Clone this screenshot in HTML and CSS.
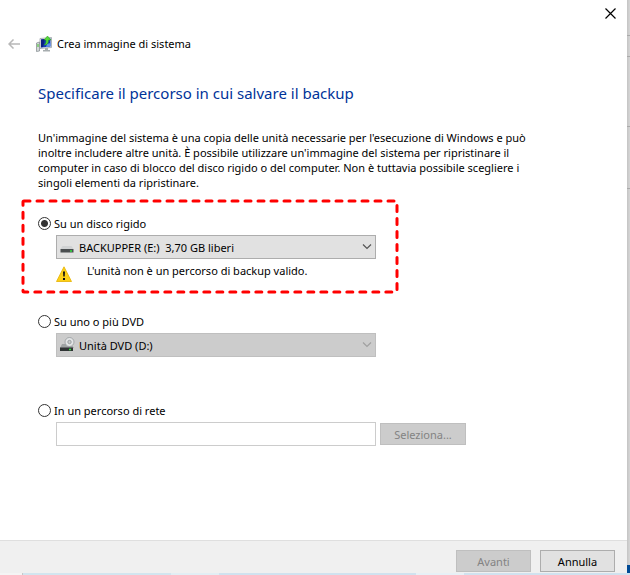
FILE: index.html
```html
<!DOCTYPE html>
<html lang="it">
<head>
  <meta charset="UTF-8">
  <meta name="viewport" content="width=device-width, initial-scale=1.0">
  <title>Crea immagine di sistema</title>
  <link rel="stylesheet" href="styles.css">
</head>
<body>
  <div class="desktop">
    <div class="window">
      <header class="titlebar">
        <button class="close" type="button" aria-label="Chiudi">
          <svg width="11" height="11" viewBox="0 0 11 11"><path d="M.5 .5l10 10M10.500 .5l-10 10" stroke="#000" stroke-width="1.2"/></svg>
        </button>
      </header>
      <div class="wizard-title">
        <button class="back" type="button" aria-label="Indietro" disabled>
          <svg width="12" height="10" viewBox="0 0 12 10" fill="none" stroke="#b8b8b8" stroke-width="1.500"><path d="M12 5H1M5.500 .5L1 5l4.500 4.500"/></svg>
        </button>
        <svg class="app-icon" width="16" height="16" viewBox="0 0 16 16">
          <path d="M.5 7l3-1v9l-3 .5z" fill="#d5d8da" stroke="#7e8689" stroke-width=".7"/>
          <path d="M2 8v3" stroke="#45c62c"/>
          <path d="M4 2.500L15.500 1.500v10L4 12.500z" fill="#e6ebee" stroke="#929a9f" stroke-width=".7"/>
          <path d="M5 3.500l9.500-1v8l-9.500 1z" fill="#1638b8"/>
          <path d="M5 3.500l4-.5-2 8-2 .3z" fill="#0b1f82"/>
          <path d="M11 8l3.500-1v3.500l-4.500 .5z" fill="#5e93e8"/>
          <path d="M9 12h3v2h2v1.500H7V14h2z" fill="#a7adaf"/>
          <path d="M8 9c2-1 2-3 2-5H8l3.500-4L15 4h-2.500c0 3-1 5-4.500 5z" fill="#55d83a" stroke="#24991c" stroke-width=".5"/>
        </svg>
        <span>Crea immagine di sistema</span>
      </div>

      <main class="page">
        <h1>Specificare il percorso in cui salvare il backup</h1>
        <p class="intro">
          Un'immagine del sistema è una copia delle unità necessarie per l'esecuzione di Windows e può<br>
          inoltre includere altre unità. È possibile utilizzare un'immagine del sistema per ripristinare il<br>
          computer in caso di blocco del disco rigido o del computer. Non è tuttavia possibile scegliere i<br>
          singoli elementi da ripristinare.
        </p>

        <section class="option highlight">
          <svg class="outline" aria-hidden="true"><rect width="100%" height="100%" rx="1"/></svg>
          <label class="choice"><input type="radio" name="target" checked>Su un disco rigido</label>
          <div class="drive">
            <select aria-label="Disco rigido">
              <option>BACKUPPER (E:)&nbsp; 3,70 GB liberi</option>
            </select>
            <svg class="drive-icon" width="16" height="16" viewBox="0 0 16 16">
              <path d="M3.500 7h9l2 3h-13z" fill="#d0d2d3"/>
              <path d="M1.500 10h13v3.500h-13z" fill="#4a4e50"/>
              <path d="M11 12h2" stroke="#31e63e" stroke-width="1.500"/>
            </svg>
            <svg class="chevron" width="10" height="6" viewBox="0 0 10 6"><path d="M1 .5l4 4 4-4"/></svg>
          </div>
          <div class="warning">
            <svg width="16" height="16" viewBox="0 0 16 16">
              <path d="M8 .8L15.500 15.500H.5z" fill="#fdd017" stroke="#e5b100" stroke-width=".8" stroke-linejoin="round"/>
              <path d="M7 5.500h2l-.3 5H7.300zM7 12h2v2H7z" fill="#111"/>
            </svg>
            <span>L'unità non è un percorso di backup valido.</span>
          </div>
        </section>

        <section class="option">
          <label class="choice"><input type="radio" name="target">Su uno o più DVD</label>
          <div class="drive">
            <select aria-label="Unità DVD" disabled>
              <option>Unità DVD (D:)</option>
            </select>
            <svg class="drive-icon" width="16" height="16" viewBox="0 0 16 16">
              <path d="M3 7h9l3 4H1z" fill="#9fa2a3"/>
              <circle cx="10.500" cy="5" r="4.500" fill="#e2e4e5" stroke="#969b9d" stroke-width=".8"/>
              <circle cx="10.500" cy="5" r="1.700" fill="#c9cccd" stroke="#8d9294" stroke-width=".8"/>
              <path d="M1 10.500h13V14H1z" fill="#2f3334"/>
              <path d="M10 12.500h2" stroke="#31e63e" stroke-width="1.500"/>
            </svg>
            <svg class="chevron" width="10" height="6" viewBox="0 0 10 6"><path d="M1 .5l4 4 4-4"/></svg>
          </div>
        </section>

        <section class="option">
          <label class="choice"><input type="radio" name="target">In un percorso di rete</label>
          <div class="network">
            <input type="text" aria-label="Percorso di rete">
            <button class="btn" type="button" disabled>Seleziona...</button>
          </div>
        </section>
      </main>

      <footer class="actions">
        <button class="btn" type="button" disabled>Avanti</button>
        <button class="btn" type="button">Annulla</button>
      </footer>
    </div>
    <div class="side-edge"></div>
    <div class="bottom-edge"></div>
  </div>
</body>
</html>
```
FILE: styles.css
```css
* {
  box-sizing: border-box;
}
body {
  margin: 0;
  font-family: "Segoe UI", "Noto Sans", "Open Sans", sans-serif;
  font-size: 11px;
  line-height: 15px;
  color: #000;
}
button, input, select {
  font: inherit;
  color: inherit;
}
.desktop {
  display: grid;
  grid-template-columns: 1fr 3px;
  grid-template-rows: 1fr 2px;
  min-height: 100vh;
}
.window {
  display: flex;
  flex-direction: column;
  background: #fff;
}
.side-edge {
  background:
    linear-gradient(#aaa, #aaa) 0 35px / 3px 1px no-repeat,
    linear-gradient(#aaa, #aaa) 0 56px / 3px 1px no-repeat,
    linear-gradient(#aaa, #aaa) 0 126px / 3px 1px no-repeat,
    linear-gradient(#aaa, #aaa) 0 188px / 3px 1px no-repeat,
    linear-gradient(#004b96, #004b96) 0 100% / 3px 8px no-repeat,
    linear-gradient(90deg, #c4c4c4, #d6d6d6);
}
.bottom-edge {
  grid-column: 1 / -1;
  background: linear-gradient(90deg, #f4f4f4 22px, #c8c8c8 22px 23px, #d2e5ef 23px 171px, #e2eef4 171px 219px, #d0e2ef 219px 416px, #e7f0f6 416px 464px, #d0e2ef 464px);
}

/* title */
.titlebar {
  display: flex;
  justify-content: flex-end;
  height: 28px;
  padding: 8px 11px 0 0;
}
.close, .back {
  display: flex;
  padding: 0;
  border: 0;
  background: none;
}
.close {
  align-self: flex-start;
}
.wizard-title {
  display: flex;
  align-items: center;
  height: 31px;
  padding-left: 8px;
}
.app-icon {
  margin: 0 5px 0 16px;
}

/* page */
.page {
  flex: 1;
  padding: 24px 22px 0;
}
h1 {
  margin: 0 0 27px 16px;
  font-size: 15px;
  line-height: 20px;
  font-weight: normal;
  color: #003399;
}
.intro {
  margin: 0 0 10px 16px;
  white-space: nowrap;
}
.option {
  width: 376px;
  max-width: 100%;
  padding: 15px 0 0 16px;
  margin-bottom: 30px;
}
.highlight {
  position: relative;
  padding-bottom: 11px;
  margin-bottom: 5px;
}
.outline {
  position: absolute;
  inset: 1px;
  width: calc(100% - 2px);
  height: calc(100% - 2px);
  overflow: visible;
}
.outline rect {
  fill: none;
  stroke: #f00;
  stroke-width: 3px;
  stroke-dasharray: 6 7;
  stroke-linecap: round;
}
.choice {
  display: flex;
  align-items: center;
  gap: 3px;
  height: 17px;
  position: relative;
}
.choice input {
  appearance: none;
  width: 13px;
  height: 13px;
  margin: 0;
  border: 1px solid #333;
  border-radius: 50%;
  background: #fff;
}
.choice input:checked {
  background: radial-gradient(circle, #333 3px, #fff 4px);
}
.drive {
  display: grid;
  align-items: center;
  width: 320px;
  margin: 3px 0 0 18px;
  position: relative;
}
.drive > * {
  grid-area: 1 / 1;
}
.drive select {
  appearance: none;
  width: 100%;
  height: 24px;
  padding: 0 24px 0 22px;
  border: 1px solid #adadad;
  border-radius: 0;
  background: #e1e1e1;
}
.drive select:disabled {
  border-color: #bfbfbf;
  background: #ccc;
  color: #000;
  opacity: 1;
}
.drive-icon {
  margin-left: 3px;
  pointer-events: none;
}
.chevron {
  justify-self: end;
  margin-right: 4px;
  fill: none;
  stroke: #555;
  stroke-width: 1.2px;
  pointer-events: none;
}
select:disabled ~ .chevron {
  stroke: #a0a0a0;
}
.warning {
  display: flex;
  align-items: flex-start;
  gap: 15px;
  margin: 4px 0 0 18px;
}
.warning svg {
  margin-top: 3px;
}
.network {
  display: flex;
  align-items: center;
  gap: 4px;
  margin: 3px 0 0 18px;
}
.network input {
  flex: none;
  width: 320px;
  height: 24px;
  padding: 0 4px;
  border: 1px solid #ccc;
}
.network .btn {
  flex: none;
  width: 86px;
}

/* buttons */
.btn {
  width: 75px;
  height: 22px;
  padding: 0;
  border: 1px solid #adadad;
  background: #e1e1e1;
}
.btn:disabled {
  border-color: #bfbfbf;
  background: #ccc;
  color: #838383;
}
.actions {
  display: flex;
  justify-content: flex-end;
  gap: 9px;
  padding: 9px 12px 1px;
  border-top: 1px solid #dfdfdf;
  background: #f0f0f0;
}
```
